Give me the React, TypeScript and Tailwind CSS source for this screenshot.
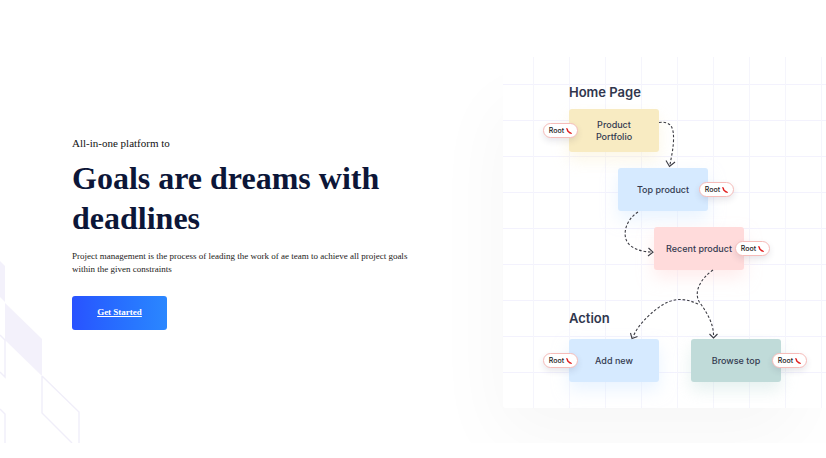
import type { ReactNode } from "react";

function Backdrop() {
  return (
    <svg
      className="pointer-events-none absolute bottom-0 left-0"
      width="80"
      height="184"
      viewBox="0 0 80 184"
      fill="none"
      aria-hidden="true"
    >
      <path d="M0 2L5 7V43L0 38Z" fill="#f3f1fb" />
      <path d="M5 44L42 80V117L5 81Z" fill="#f3f1fb" />
      <path
        d="M0 76L5 81V118L0 113M0 150L5 155V184M42 117L79 153V184M42 117V154L72 184"
        stroke="#f0eef9"
        strokeWidth="1.4"
      />
    </svg>
  );
}

function CanvasLines() {
  return (
    <svg className="absolute inset-0 h-full w-full" fill="none" aria-hidden="true">
      <defs>
        <pattern id="grid" width="36" height="36" x="30" y="27" patternUnits="userSpaceOnUse">
          <path d="M0 .5H36" stroke="#f3f2fd" />
          <path d="M.5 0V36" stroke="#f5f5fc" />
        </pattern>
      </defs>
      <rect width="100%" height="100%" fill="url(#grid)" />
    </svg>
  );
}

function Connectors() {
  return (
    <svg
      className="pointer-events-none absolute inset-0 h-full w-full"
      fill="none"
      stroke="#3c3c44"
      aria-hidden="true"
    >
      <g strokeDasharray="2.6 1.9" strokeWidth="1.1">
        <path d="M156 65.500C168 64 171 70 170.500 84C170 94 168 101 167 108" />
        <path d="M135 155C121 164 118 182 128 189C134 193.500 142 195 149 195" />
        <path d="M210 213C197 222 190 236 197 246C205 257 211 268 210.500 280" />
        <path d="M195 247C180 240 168 241 155 251C143 260 134 270 130 280" />
      </g>
      <path
        d="M163 103.500L166.500 109.500L172 105M145.500 191L150 195.200L145 199M206.500 277L210.500 281L214.500 277M127.500 276L129 281.500L134.500 279.500"
        strokeWidth="1.1"
      />
    </svg>
  );
}

function Root({ side }: { side: "left" | "right" }) {
  return (
    <span
      className={`absolute top-[14px] flex h-[15px] w-[35px] items-center justify-center gap-0.5 rounded-full border border-[#f6bcb9] bg-white text-[7px] leading-none font-medium text-[#222] shadow-[0_3px_6px_rgba(60,60,90,0.12)] ${
        side === "left" ? "-left-[26px]" : "-right-[26px]"
      }`}
    >
      Root
      <svg width="6" height="6" viewBox="0 0 6 6" aria-hidden="true">
        <path d="M0 0L1.700 .6L2.600 3L5.800 5.100V6L3.600 5.600L1.200 3.600Z" fill="#e11d1d" />
      </svg>
    </span>
  );
}

function Node({
  className,
  root,
  children,
}: {
  className: string;
  root: "left" | "right";
  children: ReactNode;
}) {
  return (
    <div
      className={`absolute flex h-[43px] items-center justify-center rounded-[3px] text-center text-[9px] leading-3 font-medium text-[#343a50] ${className}`}
    >
      <p>{children}</p>
      <Root side={root} />
    </div>
  );
}

function Diagram() {
  return (
    <div className="relative h-[351px] rounded-l-[3px] bg-white font-[Inter,sans-serif] shadow-[-16px_40px_70px_-10px_rgba(0,0,0,0.035)]">
      <CanvasLines />
      <h2 className="absolute top-[25px] left-[66px] text-[13px] leading-5 font-semibold text-[#30364d]">
        Home Page
      </h2>
      <h2 className="absolute top-[251px] left-[66px] text-[13px] leading-5 font-semibold text-[#30364d]">
        Action
      </h2>
      <Node
        root="left"
        className="top-[52px] left-[66px] w-[90px] bg-[#f8ebc2] shadow-[0_8px_16px_rgba(248,235,194,0.4)]"
      >
        Product
        <br />
        Portfolio
      </Node>
      <Node
        root="right"
        className="top-[111px] left-[115px] w-[90px] bg-[#d6eaff] shadow-[0_8px_16px_rgba(214,234,255,0.5)]"
      >
        Top product
      </Node>
      <Node
        root="right"
        className="top-[170px] left-[151px] w-[90px] bg-[#ffdbdb] shadow-[0_8px_16px_rgba(255,219,219,0.5)]"
      >
        Recent product
      </Node>
      <Node
        root="left"
        className="top-[282px] left-[66px] w-[90px] bg-[#d6eaff] shadow-[0_8px_16px_rgba(214,234,255,0.5)]"
      >
        Add new
      </Node>
      <Node
        root="right"
        className="top-[282px] left-[188px] w-[90px] bg-[#c0dbd9] shadow-[0_8px_16px_rgba(192,219,217,0.4)]"
      >
        Browse top
      </Node>
      <Connectors />
    </div>
  );
}

export default function App() {
  return (
    <main className="bg-white font-['Liberation_Serif',serif]">
      <section className="relative grid grid-cols-[503fr_323fr] items-center overflow-hidden pt-[57px] pb-[35px]">
        <Backdrop />
        <div className="relative z-10 flex flex-col items-start pr-20 pl-[72px]">
          <p className="text-[11px] leading-[14px] text-[#111]">All-in-one platform to</p>
          <h1 className="mt-2 text-[32px] leading-10 font-bold text-[#0c1638]">
            Goals are dreams with deadlines
          </h1>
          <p className="mt-3 text-[9px] leading-[13px] text-[#1b1b20]">
            Project management is the process of leading the work of ae team to achieve all project
            goals within the given constraints
          </p>
          <a
            href="#start"
            className="mt-5 flex h-[34px] w-[95px] items-center justify-center rounded-[3px] bg-linear-to-r from-[#2952ff] to-[#2b87ff] text-[9px] font-bold text-white underline"
          >
            Get Started
          </a>
        </div>
        <Diagram />
      </section>
    </main>
  );
}
